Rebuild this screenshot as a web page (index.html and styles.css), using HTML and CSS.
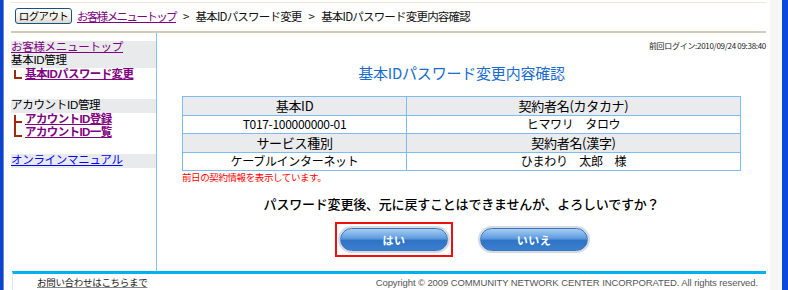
FILE: index.html
```html
<!DOCTYPE html>
<html>
<head>
<meta charset="utf-8">
<title>基本IDパスワード変更内容確認</title>
<link rel="stylesheet" href="styles.css">
</head>
<body>

<div class="window">
  <div class="win-edge-left"></div>

  <div class="page">
    <!-- Header / breadcrumb -->
    <div class="header">
      <button class="logout">ログアウト</button>
      <a class="crumb-link" href="#">お客様メニュートップ</a>
      <span class="crumb-sep">&gt;</span>
      <span class="crumb">基本IDパスワード変更</span>
      <span class="crumb-sep">&gt;</span>
      <span class="crumb">基本IDパスワード変更内容確認</span>
    </div>

    <div class="body">
      <!-- Side menu -->
      <div class="menu">
        <div class="menu-group">
          <div class="menu-head">
            <a class="menu-top" href="#">お客様メニュートップ</a>
            <div>基本ID管理</div>
          </div>
          <div class="menu-item"><span class="tree end"></span><a href="#">基本IDパスワード変更</a></div>
        </div>

        <div class="menu-group">
          <div class="menu-head">アカウントID管理</div>
          <div class="menu-item"><span class="tree mid"></span><a href="#">アカウントID登録</a></div>
          <div class="menu-item"><span class="tree end"></span><a href="#">アカウントID一覧</a></div>
        </div>

        <div class="menu-group">
          <div class="menu-head"><a class="menu-manual" href="#">オンラインマニュアル</a></div>
        </div>
      </div>

      <!-- Main content -->
      <div class="main">
        <div class="last-login">前回ログイン:2010/09/24 09:38:40</div>
        <h1 class="title">基本IDパスワード変更内容確認</h1>

        <table class="info">
          <tr class="head">
            <td class="col-a">基本ID</td>
            <td>契約者名(カタカナ)</td>
          </tr>
          <tr>
            <td class="col-a">T017-100000000-01</td>
            <td>ヒマワリ　タロウ</td>
          </tr>
          <tr class="head">
            <td class="col-a">サービス種別</td>
            <td>契約者名(漢字)</td>
          </tr>
          <tr>
            <td class="col-a">ケーブルインターネット</td>
            <td>ひまわり　太郎　様</td>
          </tr>
        </table>
        <div class="note">前日の契約情報を表示しています。</div>

        <p class="question">パスワード変更後、元に戻すことはできませんが、よろしいですか？</p>

        <div class="actions">
          <div class="focus-box"><button class="pill">はい</button></div>
          <button class="pill">いいえ</button>
        </div>
      </div>
    </div>

    <!-- Footer -->
    <div class="footer">
      <a class="contact" href="#">お問い合わせはこちらまで</a>
      <span class="copyright">Copyright &copy; 2009 COMMUNITY NETWORK CENTER INCORPORATED. All rights reserved.</span>
    </div>
  </div>

  <div class="win-scroll"></div>
  <div class="win-edge-right"></div>
</div>

</body>
</html>
```

FILE: styles.css
```css
/* Reset */
* {
  margin: 0;
  padding: 0;
  box-sizing: border-box;
}

body {
  font-family: "Noto Sans CJK JP", "Liberation Sans", sans-serif;
  font-size: 12px;
  color: #000;
  background-color: #fff;
}

a {
  color: #800080;
}

/* Browser window frame */
.window {
  display: flex;
  height: 290px;
  overflow: hidden;
}

.win-edge-left {
  width: 4px;
  background-color: #0842d6;
  border-right: 1px solid #7b8ea8;
}

.win-scroll {
  width: 12px;
  background-color: #f6f6f4;
}

.win-edge-right {
  width: 6px;
  background-color: #0a48e0;
}

.page {
  flex: 1;
  display: flex;
  flex-direction: column;
  padding: 0 4px 0 7px;
}

/* Header */
.header {
  display: flex;
  align-items: center;
  gap: 4px;
  height: 31px;
  margin-top: 2px;
  padding: 0 0 2px 4px;
  border-top: 1px solid #ebe7da;
  border-bottom: 2px solid #cfcbba;
}

.logout {
  width: 57px;
  height: 16px;
  padding: 0;
  margin-right: 1px;
  font-family: inherit;
  font-size: 10.5px;
  line-height: 12px;
  letter-spacing: -0.6px;
  white-space: nowrap;
  border: 1px solid #1c4f86;
  border-radius: 3px;
  background: linear-gradient(#ffffff, #f0efe8 60%, #dcd9cc);
  color: #000;
}

.crumb-link {
  font-size: 11.5px;
  color: #800080;
  letter-spacing: -1.6px;
}

.crumb, .crumb-sep {
  font-size: 11.5px;
  color: #111;
  letter-spacing: -0.8px;
}

.crumb-sep {
  margin: 0 3px;
}

/* Body: menu + main */
.body {
  display: flex;
  height: 238px;
}

.menu {
  width: 146px;
  padding-top: 8px;
  border-right: 1px solid #8dbdee;
  font-family: "Liberation Sans", "Noto Sans CJK JP", sans-serif;
  font-size: 11.5px;
  line-height: 13px;
  letter-spacing: -0.3px;
}

.menu-group {
  margin-bottom: 18px;
}

.menu-group:nth-child(2) {
  margin-bottom: 15px;
}

.menu-head {
  background-color: #e8eaec;
  padding: 0 0 1px 0;
}

.menu-top {
  display: block;
  color: #800080;
}

.menu-manual {
  color: #0000ff;
}

.menu-item {
  display: flex;
  align-items: flex-end;
  padding-left: 3px;
}

.menu-item a {
  font-weight: bold;
  color: #800080;
  letter-spacing: -0.6px;
}

/* Tree connector marks */
.tree {
  display: inline-block;
  width: 8px;
  height: 9px;
  margin: 0 3px 2px 0;
  border-left: 2px solid #a0280c;
  border-bottom: 2px solid #a0280c;
}

.tree.mid {
  height: 13px;
  margin-bottom: -2px;
  border-bottom: none;
  position: relative;
}

.tree.mid::after {
  content: "";
  position: absolute;
  left: 0;
  top: 6px;
  width: 6px;
  border-top: 2px solid #a0280c;
}

/* Main */
.main {
  flex: 1;
  display: flex;
  flex-direction: column;
  align-items: center;
}

.last-login {
  align-self: flex-end;
  margin-top: 8px;
  font-size: 8px;
  line-height: 10px;
  color: #222;
  letter-spacing: -0.3px;
}

.title {
  margin-top: 12px;
  font-size: 15px;
  font-weight: normal;
  color: #1a6ccc;
  line-height: 20px;
  letter-spacing: -0.2px;
}

.info {
  width: 559px;
  margin-top: 13px;
  border-collapse: collapse;
  border: 1px solid #6cb0f2;
  font-size: 12px;
}

.info td {
  height: 18.5px;
  padding: 0;
  text-align: center;
  border: 1px solid #7fbaf2;
  line-height: 16px;
  letter-spacing: -0.3px;
}

.info td.col-a {
  width: 224px;
}

.info tr.head td {
  background-color: #e9ebed;
  font-size: 13px;
}

.note {
  align-self: flex-start;
  margin-left: 25px;
  font-size: 9.5px;
  line-height: 12px;
  color: #ff0000;
  letter-spacing: -0.4px;
}

.question {
  margin-top: 13px;
  font-size: 13px;
  font-weight: 500;
  line-height: 16px;
  letter-spacing: -0.2px;
  color: #000;
}

.actions {
  display: flex;
  align-items: center;
  gap: 27px;
  margin-top: 10px;
}

.focus-box {
  padding: 4px 3px;
  border: 2px solid #ee1010;
}

.pill {
  width: 108px;
  height: 23px;
  border: 1px solid #3e74b8;
  border-radius: 12px;
  box-shadow: 0 0 0 2px #d4dbe4;
  background: linear-gradient(#a7cdf1, #5d9be0 45%, #2f73c4 55%, #3b80cf);
  color: #fff;
  font-family: inherit;
  font-size: 11px;
  font-weight: bold;
  letter-spacing: 0.5px;
}

/* Footer */
.footer {
  display: flex;
  justify-content: space-between;
  align-items: center;
  margin-left: 1px;
  height: 19px;
  border-top: 3px solid #00b2f0;
  border-left: 1px solid #e4e4e0;
  padding: 0 8px 0 24px;
  font-size: 9.5px;
}

.contact {
  color: #222;
  text-decoration-color: #888;
  letter-spacing: -0.3px;
}

.copyright {
  font-family: "Liberation Sans", sans-serif;
  color: #555;
  font-size: 9.5px;
  letter-spacing: -0.1px;
}
```
